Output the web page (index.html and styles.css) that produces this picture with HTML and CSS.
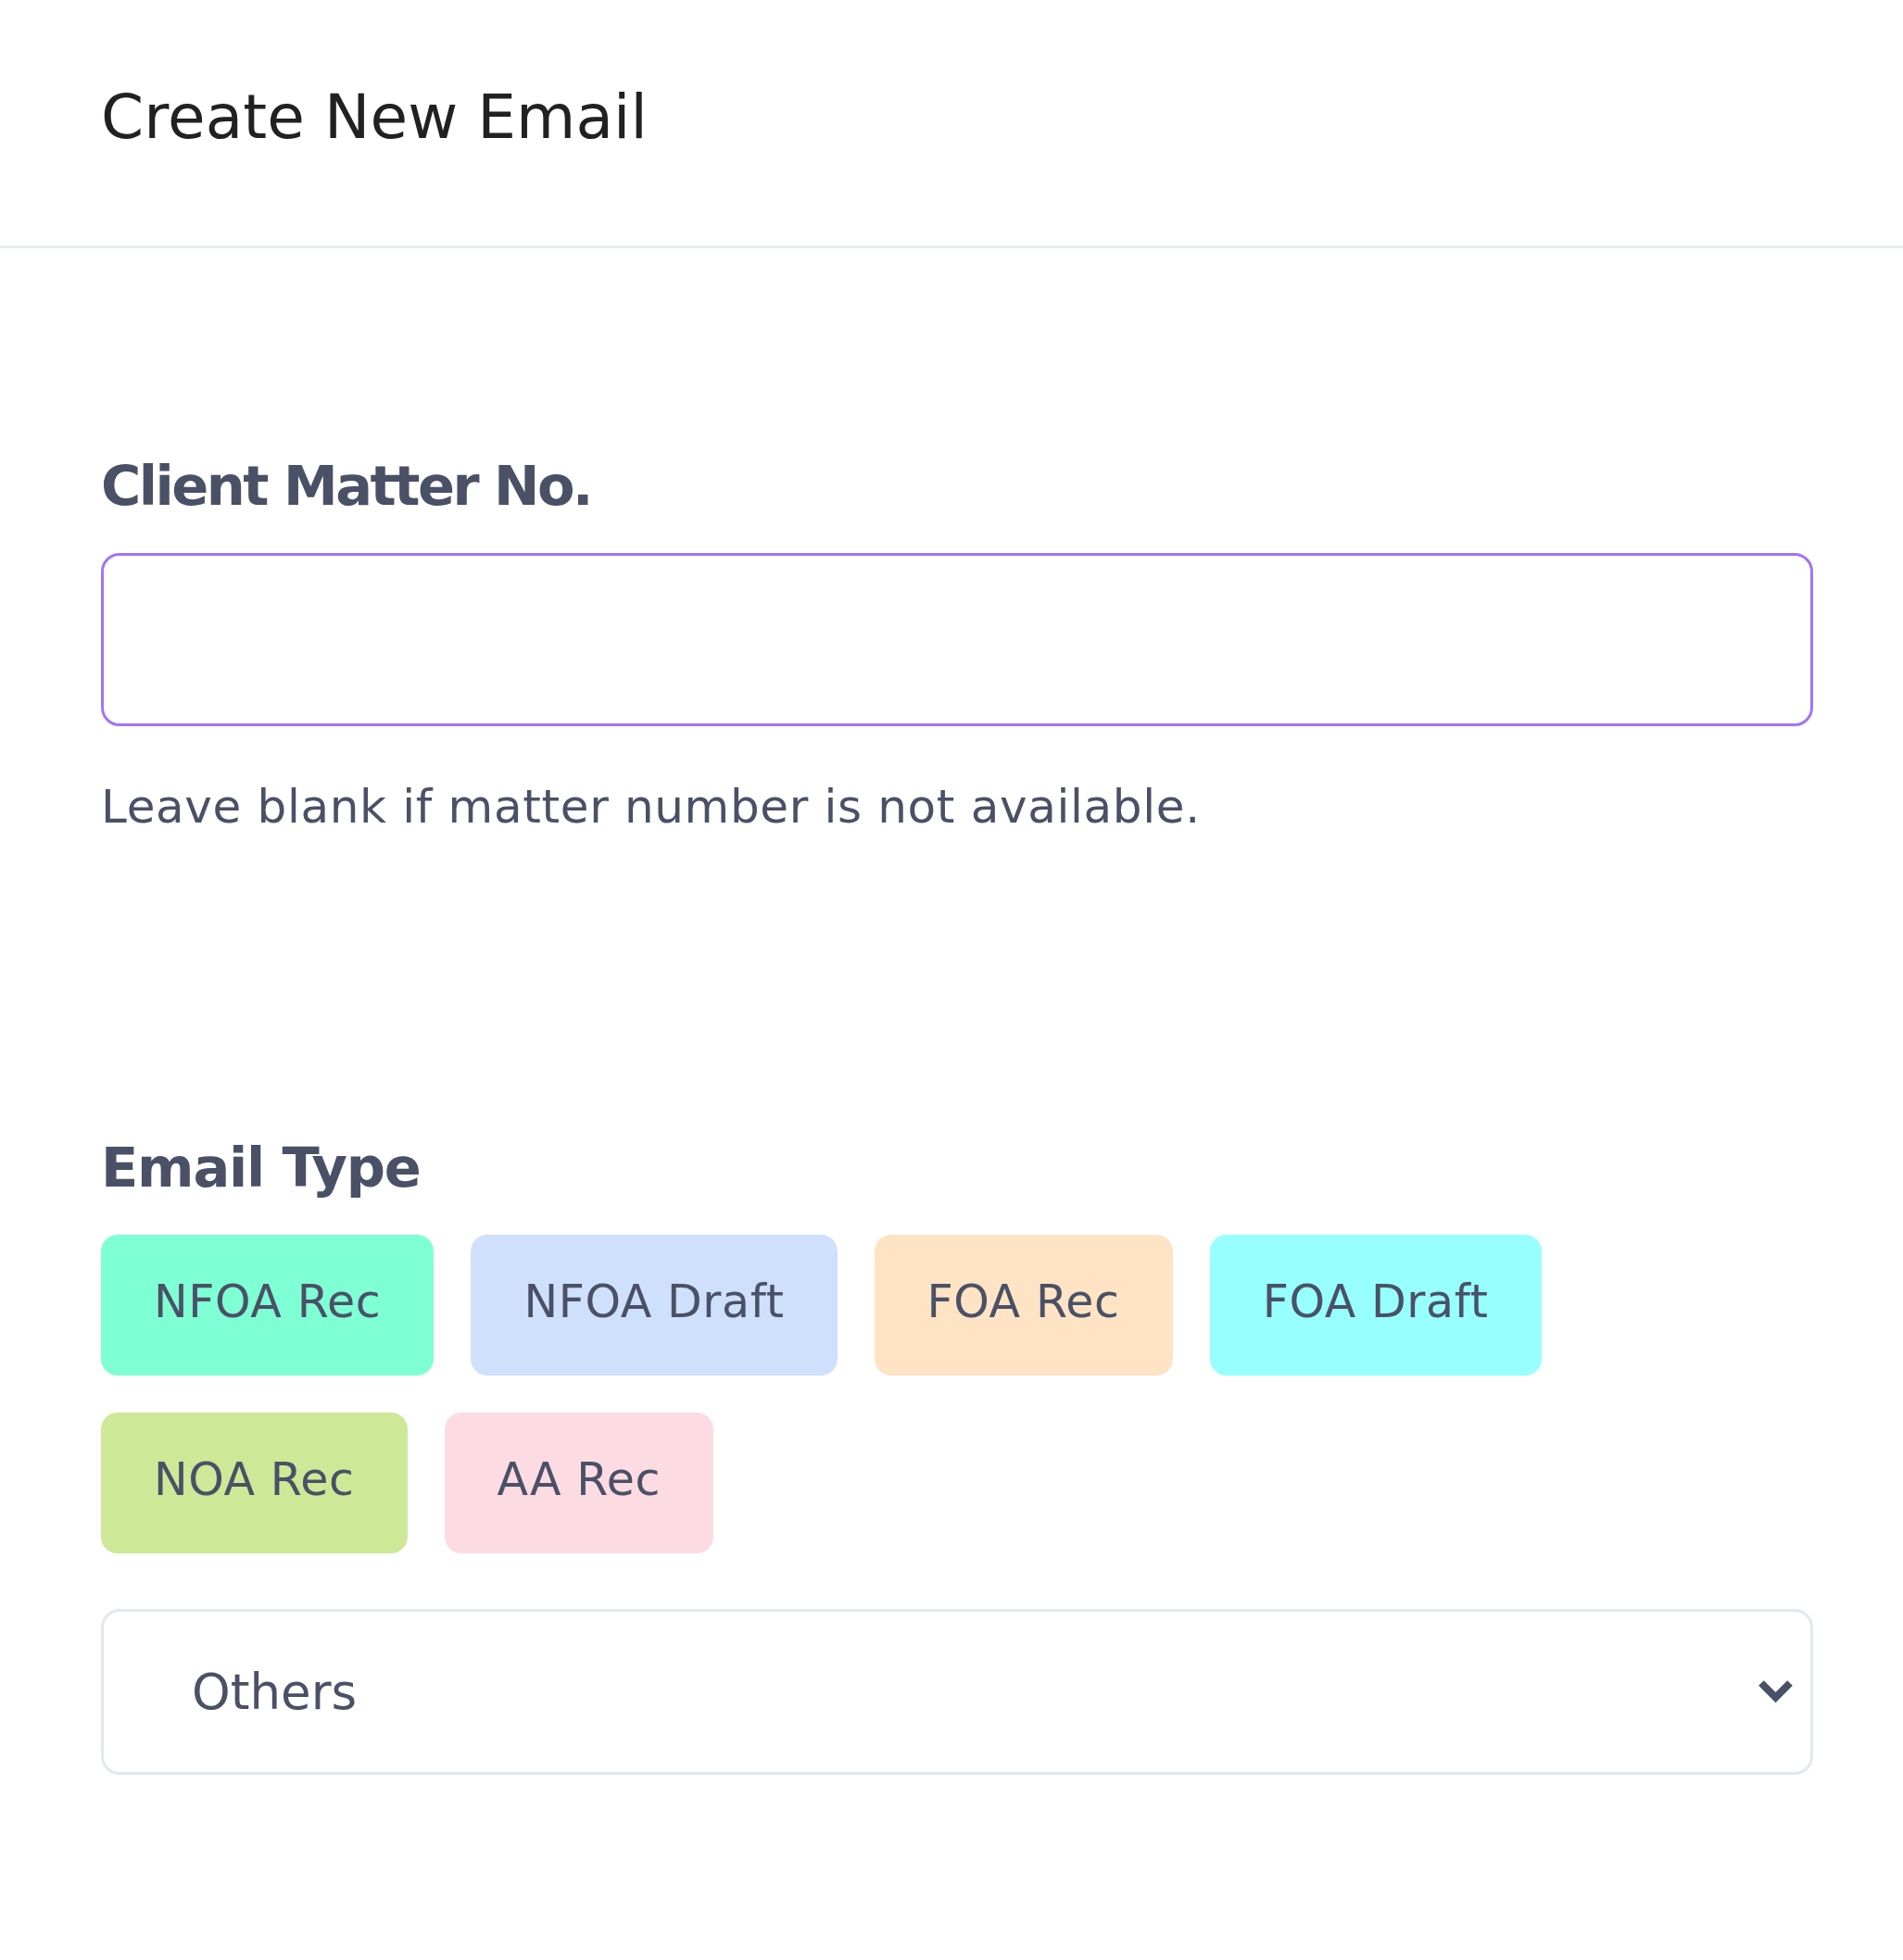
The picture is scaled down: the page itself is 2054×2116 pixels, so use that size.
FILE: index.html
```html
<!DOCTYPE html>
<html lang="en">
<head>
<meta charset="utf-8">
<title>Create New Email</title>
<link rel="stylesheet" href="styles.css">
</head>
<body>
<div class="page">
  <header class="header">
    <h1 class="title">Create New Email</h1>
  </header>
  <main class="content">
    <section class="field field-matter">
      <label class="label" for="matter">Client Matter No.</label>
      <input class="text-input" id="matter" type="text">
      <p class="help">Leave blank if matter number is not available.</p>
    </section>
    <section class="field field-type">
      <div class="label label-type">Email Type</div>
      <div class="chips">
        <button class="chip chip-nfoa-rec">NFOA Rec</button>
        <button class="chip chip-nfoa-draft">NFOA Draft</button>
        <button class="chip chip-foa-rec">FOA Rec</button>
        <button class="chip chip-foa-draft">FOA Draft</button>
        <button class="chip chip-noa-rec">NOA Rec</button>
        <button class="chip chip-aa-rec">AA Rec</button>
      </div>
      <div class="select">
        <span class="select-value">Others</span>
        <svg class="chevron" width="37" height="25" viewBox="0 0 37 25" aria-hidden="true">
          <polyline points="3,3 18.5,18.5 34,3" fill="none" stroke="#4a5066" stroke-width="8" stroke-linecap="butt" stroke-linejoin="miter"/>
        </svg>
      </div>
    </section>
  </main>
</div>
</body>
</html>
```
FILE: styles.css
```css
* {
  box-sizing: border-box;
}

html, body {
  margin: 0;
  padding: 0;
  background: #ffffff;
}

body {
  font-family: "DejaVu Sans", "Liberation Sans", sans-serif;
  color: #4a5166;
}

.page {
  width: 2054px;
  min-height: 2116px;
  background: #ffffff;
}

.header {
  padding: 94px 97px 105px 109px;
  border-bottom: 3px solid #e9edf2;
}

.title {
  margin: 0;
  font-size: 66px;
  line-height: 66px;
  font-weight: 400;
  letter-spacing: 0.1px;
  color: #212121;
}

.content {
  padding: 0 97px 0 109px;
}

.field-matter {
  padding-top: 227px;
}

.label {
  display: block;
  margin: 0;
  font-size: 59px;
  line-height: 59px;
  font-weight: 700;
  letter-spacing: -2.5px;
  color: #4a5166;
}

.label-type {
  letter-spacing: -1.2px;
}

.text-input {
  display: block;
  width: 100%;
  height: 187px;
  margin-top: 43px;
  border: 3px solid #a174f7;
  border-radius: 20px;
  background: #ffffff;
  outline: none;
  font-family: inherit;
  font-size: 50px;
  padding: 0 40px;
}

.help {
  margin: 62px 0 0 0;
  font-size: 50px;
  line-height: 50px;
  letter-spacing: 0.65px;
  color: #4a5166;
}

.field-type {
  padding-top: 335px;
}

.chips {
  display: flex;
  flex-wrap: wrap;
  gap: 40px;
  margin-top: 43px;
}

.chip {
  height: 152px;
  padding: 0 57px 6px 57px;
  border: none;
  border-radius: 18px;
  font-family: inherit;
  font-size: 49px;
  line-height: 146px;
  letter-spacing: 0.6px;
  color: #4a5166;
  white-space: nowrap;
  cursor: pointer;
}

.chip-nfoa-rec { background: #7fffd4; }
.chip-nfoa-draft { background: #cfe0fc; }
.chip-foa-rec { background: #fee4c4; }
.chip-foa-draft { background: #97fffe; }
.chip-noa-rec { background: #cde897; }
.chip-aa-rec { background: #fddbe3; }

.select {
  display: flex;
  align-items: center;
  justify-content: space-between;
  height: 179px;
  margin-top: 60px;
  padding: 0 19px 0 95px;
  border: 3px solid #e3e8ee;
  border-radius: 20px;
  background: #ffffff;
}

.select-value {
  font-size: 53px;
  line-height: 53px;
  color: #4a5166;
}

.chevron {
  display: block;
  flex: none;
}
```
